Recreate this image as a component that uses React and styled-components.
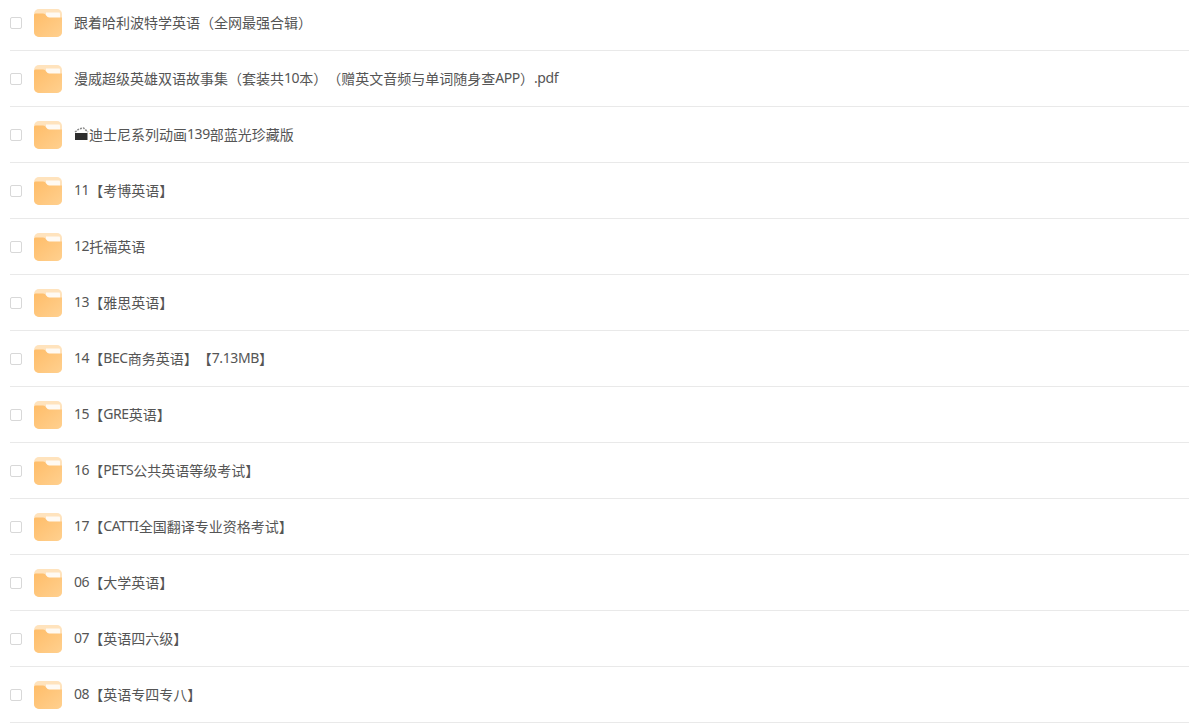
import React from 'react';
import styled, { createGlobalStyle } from 'styled-components';

const GlobalStyle = createGlobalStyle`
  html, body {
    margin: 0;
    padding: 0;
    background: #fff;
    overflow: hidden;
  }
`;

const List = styled.ul`
  list-style: none;
  margin: -5px 0 0;
  padding: 0 0 0 10px;
  font-family: "Noto Sans", "Noto Sans CJK SC", sans-serif;
`;

const Row = styled.li`
  display: flex;
  align-items: center;
  height: 55px;
  border-bottom: 1px solid #e9e9e9;
`;

const Check = styled.span`
  box-sizing: border-box;
  width: 12px;
  height: 12px;
  margin: 1px 12px 0 0;
  border: 1px solid #d8d8d8;
  border-radius: 2px;
  background: #fff;
  flex: none;
`;

const Name = styled.span`
  display: flex;
  align-items: center;
  margin-left: 12px;
  padding-bottom: 2px;
  color: #555;
  font-size: 14px;
  white-space: pre;
  text-spacing-trim: space-all;
`;

const Latin = styled.span`
  letter-spacing: -0.4px;
`;

const Clapper = styled.svg`
  width: 15px;
  height: 15px;
  flex: none;
`;

const Folder = styled.svg`
  width: 28px;
  height: 28px;
  margin-top: 1px;
  flex: none;
`;

const FolderIcon = () => (
  <Folder viewBox="0 0 28 28">
    <defs>
      <linearGradient id="folderFill" x1="0" y1="0" x2="1" y2="1">
        <stop offset="0" stopColor="#ffbd69" />
        <stop offset="1" stopColor="#ffd08f" />
      </linearGradient>
    </defs>
    <rect width="28" height="28" rx="5" fill="#ffe3bd" />
    <path d="M12 3.5h13a1 1 0 0 1 1 1V9H12z" fill="#fffaf3" />
    <path
      d="M0 6a1.5 1.5 0 0 1 1.5-1.5H9c1.6 0 2.2.8 3.2 2s1.6 2 3.2 2H28V23a5 5 0 0 1-5 5H5a5 5 0 0 1-5-5z"
      fill="url(#folderFill)"
    />
  </Folder>
);

const ClapperIcon = () => (
  <Clapper viewBox="0 0 15 15">
    <rect x="1" y="7" width="12.5" height="7" fill="#2e2e2e" />
    <path
      d="M1 6 5 3l4.5-1 4.5 4"
      fill="none"
      stroke="#8a8a8a"
      strokeWidth="1.5"
      strokeDasharray="2 1"
    />
  </Clapper>
);

// latin runs sit a little tighter than the CJK around them
const splitRuns = (text) =>
  text
    .split(/([A-Za-z0-9.]+)/)
    .filter(Boolean)
    .map((run, i) =>
      /^[A-Za-z0-9.]+$/.test(run) ? <Latin key={i}>{run}</Latin> : run,
    );

const items = [
  { name: '跟着哈利波特学英语（全网最强合辑）' },
  { name: '漫威超级英雄双语故事集（套装共10本）（赠英文音频与单词随身查APP）.pdf' },
  { name: '迪士尼系列动画139部蓝光珍藏版', clapper: true },
  { name: '11【考博英语】' },
  { name: '12托福英语' },
  { name: '13【雅思英语】' },
  { name: '14【BEC商务英语】【7.13MB】' },
  { name: '15【GRE英语】' },
  { name: '16【PETS公共英语等级考试】' },
  { name: '17【CATTI全国翻译专业资格考试】' },
  { name: '06【大学英语】' },
  { name: '07【英语四六级】' },
  { name: '08【英语专四专八】' },
];

const App = () => (
  <>
    <GlobalStyle />
    <List>
      {items.map((item) => (
        <Row key={item.name}>
          <Check />
          <FolderIcon />
          <Name>
            {item.clapper && <ClapperIcon />}
            {splitRuns(item.name)}
          </Name>
        </Row>
      ))}
    </List>
  </>
);

export default App;
